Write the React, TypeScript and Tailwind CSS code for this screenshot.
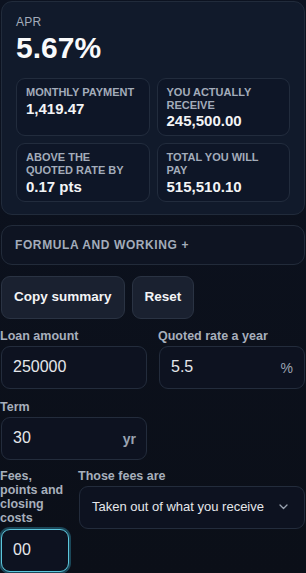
import React from "react";

const font = { fontFamily: '"Liberation Sans", Arial, sans-serif' };

function Tile({ label, value }: { label: string; value: string }) {
  return (
    <div className="rounded-[9px] border border-[#222c3d] bg-[#0e1627] px-[9px] pt-[7px] pb-[5px]">
      <div className="text-[11px] font-bold uppercase leading-[1.15] text-[#a3acba]">{label}</div>
      <div className="mt-px text-[15px] font-bold leading-[18px] text-[#f3f4f6]">{value}</div>
    </div>
  );
}

function Label({ children }: { children: React.ReactNode }) {
  return <div className="text-[12.5px] font-bold leading-[14px] text-[#a7afbc]">{children}</div>;
}

export default function App() {
  return (
    <div
      style={font}
      className="h-[573px] w-[306px] overflow-hidden bg-gradient-to-b from-[#0c1220] to-[#0b0f18] text-white"
    >
      <div className="mx-px mt-px rounded-[11px] border border-[#212b3b] bg-[#111a2b] px-[14px] pt-3 pb-3">
        <div className="text-[12px] leading-4 tracking-[0.02em] text-[#a3acba]">APR</div>
        <div className="text-[30px] font-bold leading-[36px] text-[#f9fafb]">5.67%</div>
        <div className="mt-3 grid grid-cols-2 gap-[7px]">
          <Tile label="Monthly payment" value="1,419.47" />
          <Tile label="You actually receive" value="245,500.00" />
          <Tile label="Above the quoted rate by" value="0.17 pts" />
          <Tile label="Total you will pay" value="515,510.10" />
        </div>
      </div>

      <div className="mx-px mt-[10px] rounded-[11px] border border-[#222b3a] bg-[#0e1422] px-[13px] py-[11px]">
        <div className="text-[12px] font-bold uppercase leading-4 tracking-[0.05em] text-[#a3acba]">
          Formula and working +
        </div>
      </div>

      <div className="mx-px mt-[11px] flex gap-[7px]">
        <button className="h-[43px] rounded-[9px] border border-[#2a3343] bg-[#1a2130] px-[12px] text-[13.5px] font-bold text-[#f3f4f6]">
          Copy summary
        </button>
        <button className="h-[43px] rounded-[9px] border border-[#2a3343] bg-[#1a2130] px-[12px] text-[13.5px] font-bold text-[#f3f4f6]">
          Reset
        </button>
      </div>

      <div className="mt-[10px] grid grid-cols-[148px_148px] gap-x-[10px]">
        <div className="flex flex-col gap-[3px]">
          <Label>Loan amount</Label>
          <div className="mx-px flex h-[43px] items-center rounded-[9px] border border-[#232c3c] bg-[#0d1220] px-[11px] text-[16px] text-[#e5e7eb]">
            250000
          </div>
        </div>
        <div className="flex flex-col gap-[3px]">
          <Label>Quoted rate a year</Label>
          <div className="mx-px flex h-[43px] items-center justify-between rounded-[9px] border border-[#232c3c] bg-[#0d1220] pl-[11px] pr-[11px] text-[16px] text-[#e5e7eb]">
            <span>5.5</span>
            <span className="mt-[2px] text-[14px] text-[#9aa3b1]">%</span>
          </div>
        </div>
      </div>

      <div className="mt-[11px] grid grid-cols-[148px_148px] gap-x-[10px]">
        <div className="flex flex-col gap-[3px]">
          <Label>Term</Label>
          <div className="mx-px flex h-[43px] items-center justify-between rounded-[9px] border border-[#232c3c] bg-[#0d1220] pl-[11px] pr-[10px] text-[16px] text-[#e5e7eb]">
            <span>30</span>
            <span className="mt-[2px] text-[14px] font-bold text-[#9aa3b1]">yr</span>
          </div>
        </div>
      </div>

      <div className="mt-[9px] grid grid-cols-[70px_1fr] gap-x-[8px]">
        <div className="flex flex-col gap-[4px]">
          <Label>Fees, points and closing costs</Label>
          <div className="mx-px flex h-[43px] items-center rounded-[9px] border border-[#5cc6dc] bg-[#0d1220] px-[11px] text-[16px] text-[#e5e7eb] shadow-[0_0_0_2px_rgba(56,178,210,0.35)]">
            00
          </div>
        </div>
        <div className="flex flex-col gap-[3px]">
          <Label>Those fees are</Label>
          <div className="mx-px flex h-[43px] items-center justify-between rounded-[9px] border border-[#232c3c] bg-[#0d1220] pl-[12px] pr-[16px] text-[13px] text-[#e5e7eb]">
            <span>Taken out of what you receive</span>
            <svg width="9" height="6" viewBox="0 0 9 6" fill="none">
              <path d="M1 1l3.5 3.5L8 1" stroke="#9aa3b1" strokeWidth="1.3" strokeLinecap="round" strokeLinejoin="round" />
            </svg>
          </div>
        </div>
      </div>
    </div>
  );
}
